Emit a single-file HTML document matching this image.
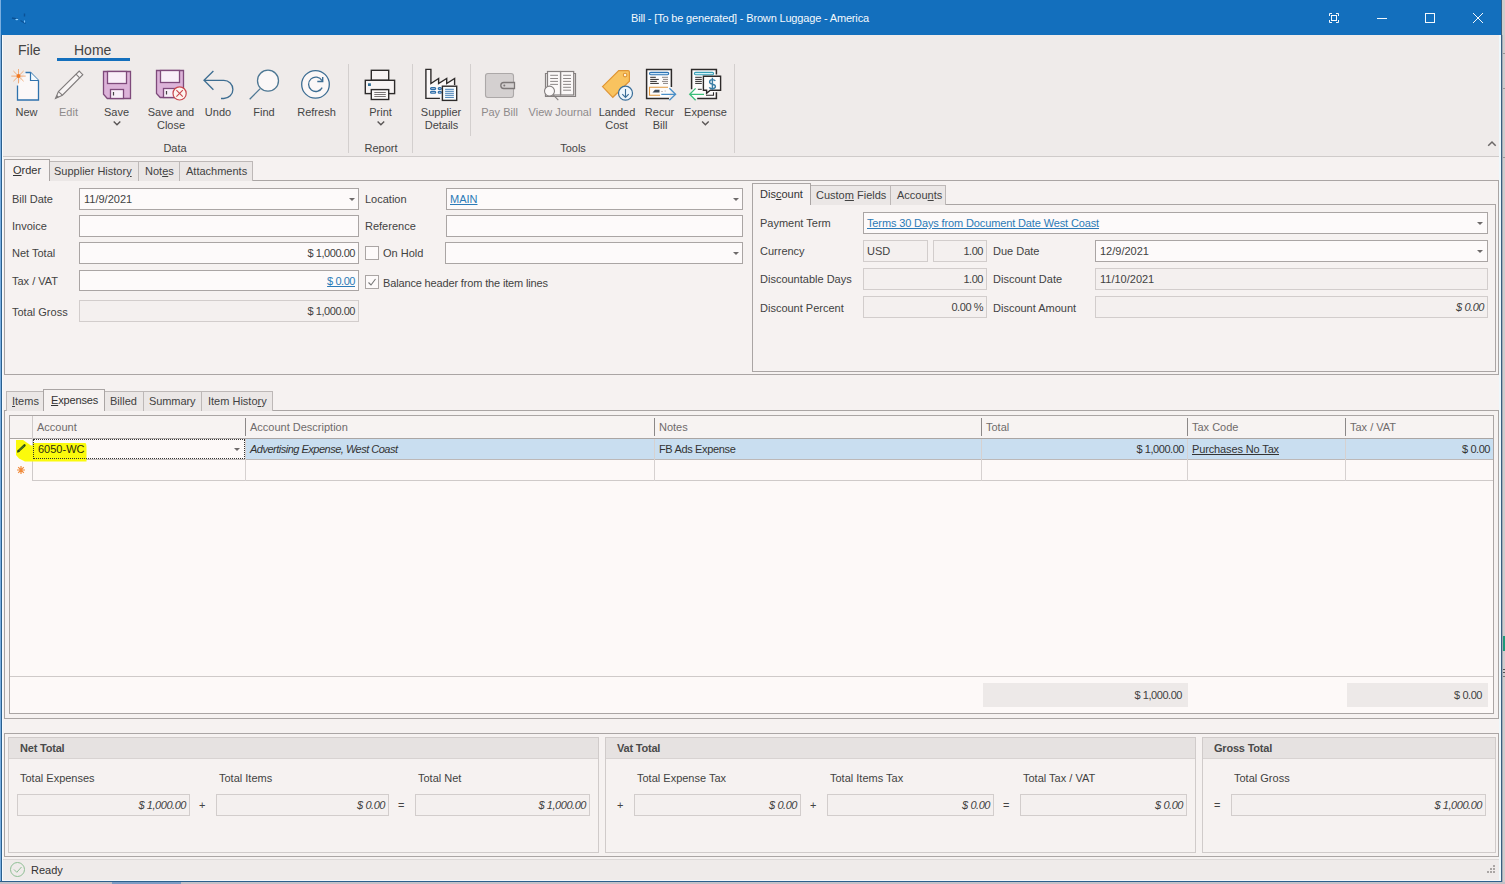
<!DOCTYPE html>
<html><head><meta charset="utf-8"><style>*{box-sizing:border-box}
html,body{margin:0;padding:0}
body{width:1505px;height:884px;position:relative;overflow:hidden;background:#d6d6d8;font-family:"Liberation Sans",sans-serif}
.a{position:absolute}
.t{position:absolute;font-size:11px;line-height:13px;color:#424242;white-space:pre}
.in{position:absolute;border:1px solid #aaa5a4;background:#fdfafa}
.ro{position:absolute;border:1px solid #d2cdcc;background:#f4f0ef}
.lnk{color:#2c7ab7;text-decoration:underline}
.tab{position:absolute;border:1px solid #bdb8b7;border-bottom:none;background:#ebe7e6}
.tabs{position:absolute;border:1px solid #aaa5a4;border-bottom:none;background:#f6f2f1}
.pnl{position:absolute;border:1px solid #aaa5a4}
.dd{position:absolute;width:0;height:0;border-left:3px solid transparent;border-right:3px solid transparent;border-top:3px solid #6e6a6a}
.grp{position:absolute;border:1px solid #d0cbca;background:#f6f2f1}
.dis{color:#8d8a8a}
.b{font-weight:bold}
.i{font-style:italic}
.num{letter-spacing:-0.45px}
.hdr{color:#6f6b6b}
svg{position:absolute;overflow:visible}
</style></head><body>
<div class="a" style="left:0;top:0;width:1502px;height:881px;background:#f6f2f1"></div>
<div class="a" style="left:0px;top:0px;width:1502px;height:35px;background:#136fbd"></div>
<div class="t " style="left:631px;top:12px;color:#f4f8fc;letter-spacing:-0.17px">Bill - [To be generated] - Brown Luggage - America</div>
<div class="a" style="left:2px;top:35px;width:1499px;height:121px;background:#efebea"></div>
<div class="a" style="left:2px;top:156px;width:1499px;height:1px;background:#cfcbca"></div>
<div class="t " style="left:18px;top:42px;font-size:14px;line-height:17px;color:#444">File</div>
<div class="t " style="left:74px;top:42px;font-size:14px;line-height:17px;color:#444">Home</div>
<div class="a" style="left:57px;top:58px;width:73px;height:3px;background:#136fbd"></div>
<div class="t" style="left:-33.5px;width:120px;top:106px;text-align:center;color:#454545">New</div>
<div class="t" style="left:8.5px;width:120px;top:106px;text-align:center;color:#8e8a8a">Edit</div>
<div class="t" style="left:56.5px;width:120px;top:106px;text-align:center;color:#454545">Save</div>
<div class="t" style="left:111px;width:120px;top:106px;text-align:center;color:#454545">Save and</div>
<div class="t" style="left:111px;width:120px;top:119px;text-align:center;color:#454545">Close</div>
<div class="t" style="left:158px;width:120px;top:106px;text-align:center;color:#454545">Undo</div>
<div class="t" style="left:204px;width:120px;top:106px;text-align:center;color:#454545">Find</div>
<div class="t" style="left:256.5px;width:120px;top:106px;text-align:center;color:#454545">Refresh</div>
<div class="t" style="left:320.5px;width:120px;top:106px;text-align:center;color:#454545">Print</div>
<div class="t" style="left:381px;width:120px;top:106px;text-align:center;color:#454545">Supplier</div>
<div class="t" style="left:381.5px;width:120px;top:119px;text-align:center;color:#454545">Details</div>
<div class="t" style="left:439.5px;width:120px;top:106px;text-align:center;color:#8e8a8a">Pay Bill</div>
<div class="t" style="left:500px;width:120px;top:106px;text-align:center;color:#8e8a8a">View Journal</div>
<div class="t" style="left:557px;width:120px;top:106px;text-align:center;color:#454545">Landed</div>
<div class="t" style="left:556.5px;width:120px;top:119px;text-align:center;color:#454545">Cost</div>
<div class="t" style="left:599.5px;width:120px;top:106px;text-align:center;color:#454545">Recur</div>
<div class="t" style="left:600px;width:120px;top:119px;text-align:center;color:#454545">Bill</div>
<div class="t" style="left:645.5px;width:120px;top:106px;text-align:center;color:#454545">Expense</div>
<div class="t" style="left:115px;width:120px;top:142px;text-align:center;color:#454545">Data</div>
<div class="t" style="left:321px;width:120px;top:142px;text-align:center;color:#454545">Report</div>
<div class="t" style="left:513px;width:120px;top:142px;text-align:center;color:#454545">Tools</div>
<div class="a" style="left:348px;top:64px;width:1px;height:89px;background:#d3cfce"></div>
<div class="a" style="left:412px;top:64px;width:1px;height:89px;background:#d3cfce"></div>
<div class="a" style="left:470px;top:64px;width:1px;height:72px;background:#d3cfce"></div>
<div class="a" style="left:734px;top:64px;width:1px;height:89px;background:#d3cfce"></div>
<div class="a" style="left:2px;top:157px;width:1499px;height:702px;background:#f6f2f1"></div>
<div class="pnl" style="left:4px;top:180px;width:1495px;height:195px"></div>
<div class="tab" style="left:49px;top:161px;width:90px;height:20px"></div>
<div class="tab" style="left:138px;top:161px;width:42px;height:20px"></div>
<div class="tab" style="left:179px;top:161px;width:74px;height:20px"></div>
<div class="tabs" style="left:4px;top:159px;width:46px;height:22px"></div>
<div class="t " style="left:13px;top:164px;color:#333"><u>O</u>rder</div>
<div class="t " style="left:54px;top:165px;">Supplier Histor<u>y</u></div>
<div class="t " style="left:145px;top:165px;">Not<u>e</u>s</div>
<div class="t " style="left:186px;top:165px;">Attachments</div>
<div class="t " style="left:12px;top:193px;">Bill Date</div>
<div class="t " style="left:12px;top:220px;">Invoice</div>
<div class="t " style="left:12px;top:247px;">Net Total</div>
<div class="t " style="left:12px;top:275px;">Tax / VAT</div>
<div class="t " style="left:12px;top:306px;">Total Gross</div>
<div class="in" style="left:79px;top:188px;width:280px;height:22px;"></div>
<div class="t " style="left:84px;top:193px;">11/9/2021</div>
<div class="dd" style="left:349px;top:198px"></div>
<div class="in" style="left:79px;top:215px;width:280px;height:22px;"></div>
<div class="in" style="left:79px;top:242px;width:280px;height:22px;"></div>
<div class="t num" style="right:1150px;top:247px;">$ 1,000.00</div>
<div class="in" style="left:79px;top:270px;width:280px;height:21px;"></div>
<div class="t num lnk" style="right:1150px;top:275px;">$ 0.00</div>
<div class="ro" style="left:79px;top:300px;width:280px;height:22px;"></div>
<div class="t num" style="right:1150px;top:305px;">$ 1,000.00</div>
<div class="t " style="left:365px;top:193px;">Location</div>
<div class="in" style="left:446px;top:188px;width:297px;height:22px;"></div>
<div class="t lnk" style="left:450px;top:193px;">MAIN</div>
<div class="dd" style="left:733px;top:198px"></div>
<div class="t " style="left:365px;top:220px;">Reference</div>
<div class="in" style="left:446px;top:215px;width:297px;height:22px;"></div>
<div class="in" style="left:365px;top:246px;width:14px;height:14px;border-color:#aaa5a4;background:#fdfafa"></div>
<div class="t " style="left:383px;top:247px;">On Hold</div>
<div class="in" style="left:445px;top:242px;width:298px;height:22px;"></div>
<div class="dd" style="left:733px;top:252px"></div>
<div class="in" style="left:365px;top:275px;width:14px;height:14px;border-color:#aaa5a4;background:#fdfafa"></div>
<div class="t " style="left:383px;top:277px;letter-spacing:-0.15px">Balance header from the item lines</div>
<svg style="left:367px;top:277px" width="10" height="10"><path d="M1.5 5.5 L4 8 L8.5 2" fill="none" stroke="#777" stroke-width="1.1"/></svg>
<div class="pnl" style="left:752px;top:204px;width:744px;height:168px"></div>
<div class="tab" style="left:810px;top:185px;width:81px;height:20px"></div>
<div class="tab" style="left:890px;top:185px;width:56px;height:20px"></div>
<div class="tabs" style="left:752px;top:183px;width:59px;height:22px"></div>
<div class="t " style="left:760px;top:188px;color:#333">Dis<u>c</u>ount</div>
<div class="t " style="left:816px;top:189px;">Custo<u>m</u> Fields</div>
<div class="t " style="left:897px;top:189px;">Accou<u>n</u>ts</div>
<div class="t " style="left:760px;top:217px;">Payment Term</div>
<div class="in" style="left:863px;top:212px;width:625px;height:22px;"></div>
<div class="t lnk" style="left:867px;top:217px;letter-spacing:-0.13px">Terms 30 Days from Document Date West Coast</div>
<div class="dd" style="left:1477px;top:222px"></div>
<div class="t " style="left:760px;top:245px;">Currency</div>
<div class="ro" style="left:863px;top:240px;width:65px;height:22px;"></div>
<div class="t " style="left:867px;top:245px;">USD</div>
<div class="ro" style="left:933px;top:240px;width:54px;height:22px;"></div>
<div class="t num" style="right:522px;top:245px;">1.00</div>
<div class="t " style="left:993px;top:245px;">Due Date</div>
<div class="in" style="left:1095px;top:240px;width:393px;height:22px;"></div>
<div class="t " style="left:1100px;top:245px;">12/9/2021</div>
<div class="dd" style="left:1477px;top:250px"></div>
<div class="t " style="left:760px;top:273px;">Discountable Days</div>
<div class="ro" style="left:863px;top:268px;width:124px;height:22px;"></div>
<div class="t num" style="right:522px;top:273px;">1.00</div>
<div class="t " style="left:993px;top:273px;">Discount Date</div>
<div class="ro" style="left:1095px;top:268px;width:393px;height:22px;"></div>
<div class="t " style="left:1100px;top:273px;">11/10/2021</div>
<div class="t " style="left:760px;top:302px;">Discount Percent</div>
<div class="ro" style="left:863px;top:296px;width:124px;height:22px;"></div>
<div class="t num" style="right:522px;top:301px;">0.00 %</div>
<div class="t " style="left:993px;top:302px;">Discount Amount</div>
<div class="ro" style="left:1095px;top:296px;width:393px;height:22px;"></div>
<div class="t num i" style="right:21px;top:301px;">$ 0.00</div>
<div class="pnl" style="left:4px;top:410px;width:1495px;height:309px"></div>
<div class="tab" style="left:6px;top:391px;width:38px;height:20px"></div>
<div class="tab" style="left:104px;top:391px;width:40px;height:20px"></div>
<div class="tab" style="left:143px;top:391px;width:59px;height:20px"></div>
<div class="tab" style="left:201px;top:391px;width:72px;height:20px"></div>
<div class="tabs" style="left:43px;top:389px;width:62px;height:22px"></div>
<div class="t " style="left:12px;top:395px;"><u>I</u>tems</div>
<div class="t " style="left:51px;top:394px;color:#333;letter-spacing:-0.15px"><u>E</u>xpenses</div>
<div class="t " style="left:110px;top:395px;">Billed</div>
<div class="t " style="left:149px;top:395px;letter-spacing:-0.1px">Summary</div>
<div class="t " style="left:208px;top:395px;">Item Histo<u>r</u>y</div>
<div class="a" style="left:9px;top:415px;width:1485px;height:299px;border:1px solid #aaa5a4;background:#fdf9f8"></div>
<div class="a" style="left:10px;top:416px;width:1483px;height:22px;background:#f7f3f2"></div>
<div class="a" style="left:10px;top:438px;width:1483px;height:1px;background:#aaa5a4"></div>
<div class="a" style="left:32px;top:416px;width:1px;height:65px;background:#cfcac9"></div>
<div class="a" style="left:245px;top:418px;width:1px;height:18px;background:#8c8888"></div>
<div class="a" style="left:654px;top:418px;width:1px;height:18px;background:#8c8888"></div>
<div class="a" style="left:981px;top:418px;width:1px;height:18px;background:#8c8888"></div>
<div class="a" style="left:1187px;top:418px;width:1px;height:18px;background:#8c8888"></div>
<div class="a" style="left:1345px;top:418px;width:1px;height:18px;background:#8c8888"></div>
<div class="t hdr" style="left:37px;top:421px;">Account</div>
<div class="t hdr" style="left:250px;top:421px;">Account Description</div>
<div class="t hdr" style="left:659px;top:421px;">Notes</div>
<div class="t hdr" style="left:986px;top:421px;">Total</div>
<div class="t hdr" style="left:1192px;top:421px;">Tax Code</div>
<div class="t hdr" style="left:1350px;top:421px;">Tax / VAT</div>
<div class="a" style="left:245px;top:439px;width:1248px;height:20px;background:#c9def0"></div>
<div class="a" style="left:33px;top:459px;width:1460px;height:1px;background:#bdb8b7"></div>
<div class="a" style="left:33px;top:480px;width:1460px;height:1px;background:#cfcac9"></div>
<div class="a" style="left:245px;top:439px;width:1px;height:42px;background:#d6d1d0"></div>
<div class="a" style="left:654px;top:439px;width:1px;height:42px;background:#d6d1d0"></div>
<div class="a" style="left:981px;top:439px;width:1px;height:42px;background:#d6d1d0"></div>
<div class="a" style="left:1187px;top:439px;width:1px;height:42px;background:#d6d1d0"></div>
<div class="a" style="left:1345px;top:439px;width:1px;height:42px;background:#d6d1d0"></div>
<svg style="left:0;top:430px" width="100" height="40"><path d="M16 10 H23 L31 15.5 H33 V13 H85.5 Q86.5 14 86.5 17 V31.5 H25 L19 28.5 L16 25 Z" fill="#fbfa0c"/></svg>
<div class="a" style="left:33px;top:439px;width:212px;height:20px;border:1px dotted #333"></div>
<div class="t " style="left:38px;top:443px;color:#2e2e10">6050-WC</div>
<div class="t i" style="left:250px;top:443px;color:#333;letter-spacing:-0.5px">Advertising Expense, West Coast</div>
<div class="t " style="left:659px;top:443px;color:#333;letter-spacing:-0.35px">FB Ads Expense</div>
<div class="t num" style="right:321px;top:443px;color:#333">$ 1,000.00</div>
<div class="t " style="left:1192px;top:443px;color:#333;text-decoration:underline;letter-spacing:-0.13px">Purchases No Tax</div>
<div class="t num" style="right:15px;top:443px;color:#333">$ 0.00</div>
<div class="dd" style="left:234px;top:448px"></div>
<div class="a" style="left:10px;top:676px;width:1483px;height:1px;background:#cfcac9"></div>
<div class="a" style="left:983px;top:683px;width:205px;height:24px;background:#ede9e8"></div>
<div class="t num" style="right:323px;top:689px;">$ 1,000.00</div>
<div class="a" style="left:1347px;top:683px;width:141px;height:24px;background:#ede9e8"></div>
<div class="t num" style="right:23px;top:689px;">$ 0.00</div>
<div class="pnl" style="left:4px;top:733px;width:1495px;height:124px"></div>
<div class="grp" style="left:8px;top:737px;width:591px;height:116px"></div>
<div class="a" style="left:9px;top:738px;width:589px;height:20px;background:#e6e2e1"></div>
<div class="a" style="left:9px;top:758px;width:589px;height:1px;background:#d8d3d2"></div>
<div class="t b" style="left:20px;top:742px;color:#4a4a4a;letter-spacing:-0.2px">Net Total</div>
<div class="grp" style="left:605px;top:737px;width:591px;height:116px"></div>
<div class="a" style="left:606px;top:738px;width:589px;height:20px;background:#e6e2e1"></div>
<div class="a" style="left:606px;top:758px;width:589px;height:1px;background:#d8d3d2"></div>
<div class="t b" style="left:617px;top:742px;color:#4a4a4a;letter-spacing:-0.2px">Vat Total</div>
<div class="grp" style="left:1202px;top:737px;width:294px;height:116px"></div>
<div class="a" style="left:1203px;top:738px;width:292px;height:20px;background:#e6e2e1"></div>
<div class="a" style="left:1203px;top:758px;width:292px;height:1px;background:#d8d3d2"></div>
<div class="t b" style="left:1214px;top:742px;color:#4a4a4a;letter-spacing:-0.2px">Gross Total</div>
<div class="ro" style="left:17px;top:794px;width:173px;height:22px;"></div>
<div class="t " style="left:20px;top:772px;">Total Expenses</div>
<div class="t num i" style="right:1319px;top:799px;">$ 1,000.00</div>
<div class="ro" style="left:216px;top:794px;width:173px;height:22px;"></div>
<div class="t " style="left:219px;top:772px;">Total Items</div>
<div class="t num i" style="right:1120px;top:799px;">$ 0.00</div>
<div class="ro" style="left:415px;top:794px;width:175px;height:22px;"></div>
<div class="t " style="left:418px;top:772px;">Total Net</div>
<div class="t num i" style="right:919px;top:799px;">$ 1,000.00</div>
<div class="ro" style="left:634px;top:794px;width:167px;height:22px;"></div>
<div class="t " style="left:637px;top:772px;">Total Expense Tax</div>
<div class="t num i" style="right:708px;top:799px;">$ 0.00</div>
<div class="ro" style="left:827px;top:794px;width:167px;height:22px;"></div>
<div class="t " style="left:830px;top:772px;">Total Items Tax</div>
<div class="t num i" style="right:515px;top:799px;">$ 0.00</div>
<div class="ro" style="left:1020px;top:794px;width:167px;height:22px;"></div>
<div class="t " style="left:1023px;top:772px;">Total Tax / VAT</div>
<div class="t num i" style="right:322px;top:799px;">$ 0.00</div>
<div class="ro" style="left:1231px;top:794px;width:255px;height:22px;"></div>
<div class="t " style="left:1234px;top:772px;">Total Gross</div>
<div class="t num i" style="right:23px;top:799px;">$ 1,000.00</div>
<div class="t " style="left:199px;top:799px;color:#444">+</div>
<div class="t " style="left:398px;top:799px;color:#444">=</div>
<div class="t " style="left:617px;top:799px;color:#444">+</div>
<div class="t " style="left:810px;top:799px;color:#444">+</div>
<div class="t " style="left:1003px;top:799px;color:#444">=</div>
<div class="t " style="left:1214px;top:799px;color:#444">=</div>
<div class="a" style="left:2px;top:859px;width:1499px;height:1px;background:#dcd8d7"></div>
<div class="a" style="left:2px;top:860px;width:1499px;height:20px;background:#efebea"></div>
<div class="t " style="left:31px;top:864px;color:#333">Ready</div>
<svg style="left:10px;top:862px" width="16" height="16"><circle cx="7.5" cy="7.5" r="7" fill="none" stroke="#8fbf95" stroke-width="1"/><path d="M4 7.5 L6.8 10.3 L11.5 5" fill="none" stroke="#8fbf95" stroke-width="1"/></svg>

<svg style="left:0;top:0" width="760" height="160" viewBox="0 0 760 160">
<g fill="none" stroke-linejoin="miter" stroke-linecap="butt">
<!-- New -->
<path d="M25.5 72.5 H30.5 L38.5 80.5 V100 H17.5 V85.5" stroke="#2f72ad" stroke-width="1.3" fill="#fbf8f8"/>
<path d="M30.5 72.5 V80.5 H38.5" stroke="#2f72ad" stroke-width="1.2" fill="#f5fbfe"/>
<g stroke="#f29a5a" stroke-width="0.8">
<path d="M18.5 69 V83.3 M11.3 76.1 H25.7 M13.4 71 L23.6 81.2 M13.4 81.2 L23.6 71"/>
</g>
<circle cx="18.5" cy="76.1" r="2" fill="#f07a24"/>
<!-- Edit -->
<path d="M55.5 98.5 L58.4 91.6 L79.2 71.1 L82.8 74.7 L62.4 95.2 Z" stroke="#7f7b7b" stroke-width="1.1" fill="#f7f4f4"/>
<path d="M58.4 91.6 L62.4 95.2 M76 74.2 L79.6 77.8" stroke="#7f7b7b" stroke-width="1.1"/>
<path d="M55.5 98.5 L57 95 L59 97 Z" fill="#7f7b7b"/>
<!-- Save -->
<path d="M103.5 71.5 H130.5 V98.5 H107.3 L103.5 94.3 Z" stroke="#7e4a7b" stroke-width="1.3" fill="#dcb3d9"/>
<rect x="107.5" y="71.5" width="19" height="12" stroke="#7e4a7b" stroke-width="1.3" fill="#f8eef8"/>
<rect x="110.5" y="89.5" width="13" height="9" stroke="#7e4a7b" stroke-width="1.3" fill="#f8eef8"/>
<path d="M113.5 92 V95.5" stroke="#444" stroke-width="1.2"/>
<!-- Save and Close -->
<path d="M156.5 70.5 H183.5 V97.5 H160.2 L156.5 93.4 Z" stroke="#7e4a7b" stroke-width="1.3" fill="#dcb3d9"/>
<rect x="160.5" y="70.5" width="19" height="12" stroke="#7e4a7b" stroke-width="1.3" fill="#f8eef8"/>
<rect x="163.5" y="88.5" width="13" height="9" stroke="#7e4a7b" stroke-width="1.3" fill="#f8eef8"/>
<path d="M166.5 91 V94.5" stroke="#444" stroke-width="1.2"/>
<circle cx="179.6" cy="93.4" r="6.6" stroke="#c9474e" stroke-width="1.2" fill="#fdf4ef"/>
<path d="M176.4 90.2 L182.8 96.6 M182.8 90.2 L176.4 96.6" stroke="#c9474e" stroke-width="1.1"/>
<!-- Undo -->
<path d="M213.4 71 L204 80.3 L213.4 89.8 M204 80.3 H223.8 A9.1 9.1 0 0 1 223.8 98.5 H221" stroke="#3d6d91" stroke-width="1.3"/>
<!-- Find -->
<circle cx="268" cy="80.7" r="10.5" stroke="#4d7793" stroke-width="1.3" fill="#fbf7f7"/>
<path d="M260.2 88.6 L249.7 99.3" stroke="#4d7793" stroke-width="1.3"/>
<!-- Refresh -->
<circle cx="315.5" cy="84.4" r="13.8" stroke="#3d6d93" stroke-width="1.3" fill="#fbf7f7"/>
<path d="M322 80.6 A7.2 7.2 0 1 0 322.2 87.6" stroke="#3d6d93" stroke-width="1.3"/>
<path d="M322.7 77 V81.5 H317.3" stroke="#3d6d93" stroke-width="1.4"/>
<!-- Print -->
<rect x="371.3" y="70.3" width="17.4" height="10" stroke="#2e2b2b" stroke-width="1.4" fill="#f7f3f3"/>
<rect x="365.3" y="80.3" width="29.3" height="13.3" stroke="#2e2b2b" stroke-width="1.4" fill="#f7f3f3"/>
<rect x="371.3" y="89.6" width="17.4" height="9.9" stroke="#2e2b2b" stroke-width="1.4" fill="#fbf9f9"/>
<path d="M374.3 92.5 H385.8 M374.3 94.5 H385.8 M374.3 96.5 H385.8" stroke="#6b6666" stroke-width="0.9"/>
<rect x="368" y="83.3" width="2.9" height="2.7" fill="#2f6e96"/>
<!-- Supplier Details -->
<path d="M439.9 98.4 H425.9 V69.4 H430.9 V83.5 L438.6 78.5 V83.5 L446.7 78.5 V83.5 L454.6 78.5 V85" stroke="#2e2b2b" stroke-width="1.4" fill="#fbf8f8"/>
<g fill="none" stroke="#2e6eaa" stroke-width="1.3">
<rect x="430.6" y="87.6" width="5" height="1.8" rx="0.9"/><rect x="430.6" y="91.4" width="5" height="1.8" rx="0.9"/>
<rect x="438.3" y="87.6" width="3" height="1.8" rx="0.9"/><rect x="438.3" y="91.4" width="3" height="1.8" rx="0.9"/>
</g>
<rect x="442.4" y="86.2" width="14.3" height="14.2" stroke="#2e2b2b" stroke-width="1.4" fill="#f8fcfe"/>
<path d="M445.1 89.3 H453.9 M445.1 91.3 H453.9 M445.1 93.3 H453.9 M445.1 95.3 H453.9 M445.1 97.4 H453.9" stroke="#2f6eaa" stroke-width="0.9"/>
<!-- Pay Bill -->
<rect x="485.5" y="73.5" width="28" height="24" rx="2.5" stroke="#aca8a8" stroke-width="1.1" fill="#d4d0d0"/>
<path d="M514.5 82.5 H503.8 A3 3 0 0 0 503.8 88.5 H514.5 Z" stroke="#7d7878" stroke-width="1.3" fill="#d4d0d0"/>
<circle cx="504.3" cy="85.5" r="1" fill="#7d7878"/>
<!-- View Journal -->
<path d="M547.5 73.5 H545.5 V96.5 H575.5 V73.5 H573.7" stroke="#858080" stroke-width="1.2"/>
<rect x="547.5" y="71.5" width="13" height="23.5" stroke="#858080" stroke-width="1.2" fill="#fbf8f8"/>
<rect x="560.7" y="71.5" width="13" height="23.5" stroke="#858080" stroke-width="1.2" fill="#fbf8f8"/>
<path d="M550.2 75.3 H558 M550.2 78.5 H558 M550.2 81.4 H558 M550.2 84.4 H558 M563.1 75.3 H571 M563.1 78.5 H571 M563.1 81.4 H571 M563.1 84.4 H571 M563.1 87.3 H571 M563.1 90.2 H571" stroke="#8d8888" stroke-width="1"/>
<circle cx="549.5" cy="91.1" r="5" stroke="#858080" stroke-width="1.1" fill="#fbf8f8"/>
<path d="M553 94.7 L558.3 100.2" stroke="#858080" stroke-width="1.1"/>
<!-- Landed Cost -->
<path d="M602.5 86.6 L618.7 70.6 H628 Q629.4 70.6 629.4 72 V81.2 L612.8 97.3 Z" stroke="#df9535" stroke-width="1.2" fill="#f9c35f"/>
<circle cx="625.1" cy="75.1" r="1.8" stroke="#df9535" stroke-width="1.1" fill="#fdf3e0"/>
<circle cx="625.5" cy="93.2" r="7" stroke="#396d98" stroke-width="1.2" fill="#eef6fc"/>
<path d="M625.5 89 V97.5 M622.3 94.1 L625.5 97.5 L628.7 94.1" stroke="#396d98" stroke-width="1.1"/>
<!-- Recur Bill -->
<path d="M671.4 87 V69.5 H646.6 V98.4 H669" stroke="#2d2a2a" stroke-width="1.5" fill="#fdfcfc"/>
<rect x="649.5" y="72.4" width="19.2" height="2.4" rx="1.2" stroke="#2e74b5" stroke-width="1.1" fill="#cfe6f7"/>
<path d="M650.2 77.3 H655.8 M650.2 79.4 H658.8 M650.2 81.4 H656.8 M650.2 83.4 H658.8" stroke="#2d2a2a" stroke-width="1"/>
<path d="M662 77.3 H668 M663 79.4 H668 M662 81.4 H668 M663 83.4 H668" stroke="#8a8585" stroke-width="1"/>
<path d="M668 87.3 H649.5 V95.2 H660" stroke="#e0963d" stroke-width="1.1"/>
<path d="M661 91.5 H663 M664.5 91 H666" stroke="#b9b4b4" stroke-width="0.8"/>
<path d="M652.5 92.5 L655 89.8 H659.5 V92.5 Z" fill="#3d4a5a"/>
<path d="M661.3 94.3 H675 M669.4 88.2 L675.6 94.3 L669.4 100.2" stroke="#4a8fc8" stroke-width="1.3"/>
<!-- Expense -->
<rect x="691.6" y="69.5" width="24.8" height="28.9" fill="#fdfcfc" stroke="none"/>
<path d="M691.6 89.3 V69.5 H716.4 V74.4 M716.4 92.3 V98.4 H697.2" stroke="#2d2a2a" stroke-width="1.5" fill="none"/>

<rect x="694.4" y="72.4" width="19.2" height="2.4" rx="1.2" stroke="#3ba0b6" stroke-width="1.1" fill="#d4f1f7"/>
<path d="M695.2 77.3 H701.8 M695.2 79.4 H701.8 M695.2 81.4 H701.8 M695.2 83.4 H701.8 M697.9 89.3 H701.8" stroke="#2d2a2a" stroke-width="1"/>
<path d="M703.4 76.3 H720.6 V90.2 H710.3 L706.6 93.2 V90.2 H703.4 Z" stroke="#2d2a2a" stroke-width="1.4" fill="#fdfcfc"/>
<path d="M706 95.2 H713.5 V92.3" stroke="#2d2a2a" stroke-width="1.1"/>
<path d="M715.3 80.9 Q714.5 79.6 712.4 79.6 Q709.6 79.6 709.6 81.9 Q709.6 83.6 712.4 84.1 Q715.4 84.6 715.4 86.6 Q715.4 88.7 712.4 88.7 Q710.1 88.7 709.3 87.3 M712.4 77.8 V90" stroke="#3a7ea6" stroke-width="1.4"/>
<path d="M704 94.3 H690 M695.6 88.4 L689.7 94.3 L695.6 100.2" stroke="#3cbf7a" stroke-width="1.3"/>
<!-- dropdown chevrons -->
<path d="M113.7 121.6 L117 124.8 L120.3 121.6 M377.6 121.6 L380.9 124.8 L384.2 121.6 M702.1 121.6 L705.4 124.8 L708.7 121.6" stroke="#5a5656" stroke-width="1.4"/>
</g>
</svg>

<svg style="left:0;top:0" width="1505" height="35">
<g fill="none" stroke="#f4f8fc" stroke-width="1">
<path d="M1329.5 16 V13.5 H1332 M1336 13.5 H1338.5 V16 M1338.5 20 V22.5 H1336 M1332 22.5 H1329.5 V20"/>
<rect x="1331.5" y="15.5" width="5" height="5"/>
<path d="M1377 18.5 H1387"/>
<rect x="1425.5" y="13.5" width="9" height="9"/>
<path d="M1473 13 L1483 23 M1483 13 L1473 23"/>
</g>
<path d="M12 18 L18 19.3 M20.5 20.5 L25.5 23.5 M24.5 13.5 V16.5" stroke="#0b5296" stroke-width="1.4" fill="none"/><ellipse cx="16.8" cy="19.5" rx="1.5" ry="0.7" fill="#8fd0ff"/><ellipse cx="24.5" cy="21.5" rx="0.6" ry="1.2" fill="#7cc4ff"/>
</svg>
<svg style="left:1484px;top:138px" width="14" height="10"><path d="M4.2 7.8 L8 4 L11.7 7.8" fill="none" stroke="#6b6767" stroke-width="1.5"/></svg>
<svg style="left:0;top:0" width="100" height="490">
<path d="M18.5 451 L24.5 445.3" stroke="#2b4a1a" stroke-width="2.4" stroke-linecap="round"/><path d="M19 450.5 L24 445.8" stroke="#5f9a2a" stroke-width="0.8"/><path d="M17 452.8 L17.8 449.8 L20 451.8 Z" fill="#2b4a1a"/>
<g stroke="#f08a3a" stroke-width="1.2"><path d="M21 466 V474 M17 470 H25 M18.2 467.2 L23.8 472.8 M18.2 472.8 L23.8 467.2"/></g>
</svg>
<svg style="left:1484px;top:864px" width="14" height="14"><g fill="#aaa6a5">
<rect x="9" y="1" width="2" height="2"/><rect x="6" y="4" width="2" height="2"/><rect x="9" y="4" width="2" height="2"/>
<rect x="3" y="7" width="2" height="2"/><rect x="6" y="7" width="2" height="2"/><rect x="9" y="7" width="2" height="2"/></g></svg>
<div class="a" style="left:1502px;top:0px;width:3px;height:884px;background:#d2cdcd"></div>
<div class="a" style="left:1502px;top:53px;width:3px;height:1px;background:#9a9696"></div>
<div class="a" style="left:1502px;top:88px;width:3px;height:1px;background:#9a9696"></div>
<div class="a" style="left:1502px;top:157px;width:3px;height:1px;background:#9a9696"></div>
<div class="a" style="left:1502px;top:636px;width:3px;height:15px;background:#1f9a7a"></div>
<div class="a" style="left:1502px;top:669px;width:3px;height:1px;background:#555"></div>
<div class="a" style="left:1502px;top:672px;width:3px;height:1px;background:#555"></div>
<div class="a" style="left:1502px;top:676px;width:3px;height:1px;background:#777"></div>
<div class="a" style="left:0px;top:882px;width:1505px;height:2px;background:#c4c1c7"></div>
<div class="a" style="left:112px;top:882px;width:69px;height:2px;background:#7d9cc4"></div>
<div class="a" style="left:0px;top:0px;width:1px;height:882px;background:#7aaee0"></div>
<div class="a" style="left:1px;top:35px;width:1px;height:847px;background:#2a5f8e"></div>
<div class="a" style="left:2px;top:35px;width:1px;height:846px;background:#f6fbff"></div>
<div class="a" style="left:1499px;top:35px;width:2px;height:846px;background:#eef8fc"></div>
<div class="a" style="left:1501px;top:0px;width:1px;height:882px;background:#3a5f7f"></div>
<div class="a" style="left:1502px;top:35px;width:1px;height:847px;background:#a5aab5"></div>
<div class="a" style="left:0px;top:881px;width:1502px;height:1px;background:#2d5f8c"></div>
<div class="a" style="left:2px;top:880px;width:1499px;height:1px;background:#f2f8fc"></div>
</body></html>
